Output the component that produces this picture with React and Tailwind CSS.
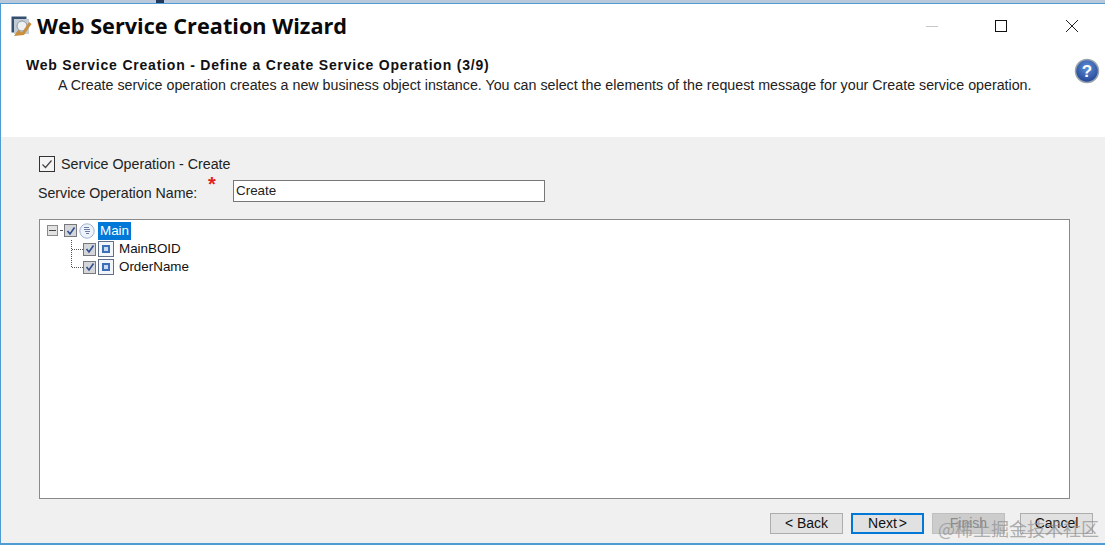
const Check = ({ color = "#2f4f8f" }) => (
  <svg width="10" height="10" viewBox="0 0 10 10" fill="none"><path d="M1.5 5 L4 8 L8.5 1.5" stroke={color} strokeWidth="1.6" /></svg>
);

const TreeCheck = () => (
  <div className="w-[13px] h-[13px] border border-[#77787c] bg-[#d4d6da] flex items-center justify-center shrink-0"><Check /></div>
);

const FieldIcon = () => (
  <div className="w-[16px] h-[16px] border border-[#5f6f88] bg-[#f2f5fa] flex items-center justify-center shrink-0">
    <div className="w-[8px] h-[8px] border-2 border-[#3c6fb5] bg-[#c8dbf3]" />
  </div>
);

const EntityIcon = () => (
  <svg width="16" height="16" viewBox="0 0 16 16" className="shrink-0">
    <circle cx="8" cy="8" r="7.2" fill="#eef2fb" stroke="#9db1d2" />
    <path d="M5 4.5 H10 M5 6.5 H11 M6 8.5 H11 M7 10.5 H10" stroke="#5b6f95" strokeWidth="0.9" />
  </svg>
);

const Button = ({ children, className = "" }) => (
  <div className={`w-[73px] h-[21px] flex items-center justify-center text-[14px] text-[#111] ${className}`}>{children}</div>
);

const TreeRow = ({ label }) => (
  <div className="flex items-center h-[18px]">
    <div className="w-[11px] border-t border-dotted border-[#555]" />
    <TreeCheck />
    <div className="w-[2px]" />
    <FieldIcon />
    <span className="ml-[5px] text-[13.4px] text-[#111]">{label}</span>
  </div>
);

export default function App() {
  return (
    <div className="w-[1105px] h-[545px] overflow-hidden relative flex flex-col bg-white font-['Liberation_Sans',Arial,sans-serif] text-[13.3px]">
      <div className="h-[3px] bg-[#b9c8da] shrink-0 flex">
        <div className="ml-[156px] w-[8px] bg-[#23395b]" />
      </div>
      <div className="flex-1 min-h-0 flex flex-col border-t border-l border-b-2 border-[#4f9bd4]">
        <header className="h-[133px] shrink-0 bg-white relative">
          <div className="flex items-center pl-[10px] pt-[3px] h-[41px]">
            <svg width="21" height="21" viewBox="0 0 21 21" className="shrink-0">
              <rect x="0.5" y="0.5" width="15" height="16" fill="#35506f" />
              <rect x="3" y="3" width="15" height="15" fill="#c3ccd4" />
              <circle cx="11" cy="10" r="5" fill="#eef0f2" stroke="#8d98a3" />
              <path d="M3 20 L7 14 L11 16.5 L18 6 L20.5 8 L13 19 Z" fill="#c98f3e" />
            </svg>
            <h1 className="ml-[5px] font-['Open_Sans',sans-serif] font-bold text-[21.7px] leading-[30px] text-[#0a0a0a] whitespace-nowrap">Web Service Creation Wizard</h1>
            <div className="ml-auto flex items-center">
              <div className="w-[12px] h-[1px] bg-[#c8c8c8] mr-[57px]" />
              <div className="w-[12px] h-[12px] border border-[#111] mr-[58px]" />
              <svg width="14" height="14" viewBox="0 0 14 14" className="mr-[26px]"><path d="M1 1 L13 13 M13 1 L1 13" stroke="#222" strokeWidth="1" /></svg>
            </div>
          </div>
          <div className="pl-[25px] pt-[12px] font-bold text-[14px] tracking-[0.79px] leading-[16px] text-[#111] whitespace-nowrap">Web Service Creation - Define a Create Service Operation (3/9)</div>
          <div className="pl-[57px] pt-[4px] text-[14.25px] leading-[16px] text-[#222] whitespace-nowrap">A Create service operation creates a new business object instance. You can select the elements of the request message for your Create service operation.</div>
          <svg width="26" height="26" viewBox="0 0 26 26" className="absolute left-[1073px] top-[54px]">
            <defs>
              <radialGradient id="q" cx="50%" cy="35%" r="70%"><stop offset="0%" stopColor="#5f8fd8" /><stop offset="100%" stopColor="#1c3f8f" /></radialGradient>
            </defs>
            <circle cx="13" cy="13" r="11.5" fill="url(#q)" stroke="#9aa3ad" strokeWidth="1.5" />
            <text x="13" y="19" textAnchor="middle" fontSize="17" fontWeight="700" fill="#fff" fontFamily="Liberation Sans">?</text>
          </svg>
        </header>
        <main className="flex-1 min-h-0 bg-[#f0f0f0] pl-[38px] pr-[35px] flex flex-col">
          <div className="flex items-center mt-[18px] h-[18px]">
            <div className="w-[16px] h-[16px] border border-[#333] bg-[#f4f4f4] flex items-center justify-center">
              <svg width="12" height="12" viewBox="0 0 12 12" fill="none"><path d="M1.5 6.5 L4.5 9.5 L10.5 2.5" stroke="#444" strokeWidth="1.2" /></svg>
            </div>
            <span className="ml-[6px] mt-[2px] text-[14.25px] text-[#222]">Service Operation - Create</span>
          </div>
          <div className="flex items-start h-[22px] mt-[7px] relative">
            <span className="mt-[5px] -ml-[1px] w-[195px] text-[14.2px] leading-[17px] text-[#222] whitespace-nowrap">Service Operation Name:</span>
            <span className="absolute left-[169px] -top-[6px] text-[#e02020] text-[20px] leading-[20px] font-bold">*</span>
            <div className="w-[312px] h-[22px] border border-[#777] bg-white flex items-center pl-[2px] pt-[1px] text-[13.4px] text-[#222]">Create</div>
          </div>
          <div className="mt-[17px] h-[280px] border border-[#8a8a8a] bg-white pl-[7px] pt-[1px] text-[13.4px]">
            <div className="flex items-center h-[19px] gap-[2px]">
              <div className="w-[11px] h-[11px] border border-[#8a8a8a] bg-[#e2e2e2] flex items-center justify-center shrink-0">
                <div className="w-[7px] h-[1px] bg-[#444]" />
              </div>
              <div className="w-[2px] border-t border-dotted border-[#555]" />
              <TreeCheck />
              <EntityIcon />
              <span className="ml-[1px] h-[18px] px-[2px] bg-[#0078d7] text-white leading-[18px]">Main</span>
            </div>
            <div className="ml-[24px] border-l border-dotted border-[#555] h-[27px] w-fit">
              <TreeRow label="MainBOID" />
              <TreeRow label="OrderName" />
            </div>
          </div>
          <div className="flex justify-end items-center gap-[8px] mt-[14px] -mr-[23px]">
            <Button className="border border-[#adadad] bg-[#e1e1e1]">&lt; Back</Button>
            <Button className="border-2 border-[#0078d7] bg-[#e1e1e1] [word-spacing:-2px]">Next &gt;</Button>
            <Button className="border border-[#bfbfbf] bg-[#cccccc] !text-[#8a8a8a]">Finish</Button>
            <Button className="ml-[7px] border border-[#adadad] bg-[#e1e1e1]">Cancel</Button>
          </div>
        </main>
      </div>
      <div className="absolute left-[938px] top-[516px] text-[18px] leading-[24px] text-[#8f8f8f]/70 font-['Noto_Sans_CJK_SC',sans-serif] whitespace-nowrap">@稀土掘金技术社区</div>
    </div>
  );
}
